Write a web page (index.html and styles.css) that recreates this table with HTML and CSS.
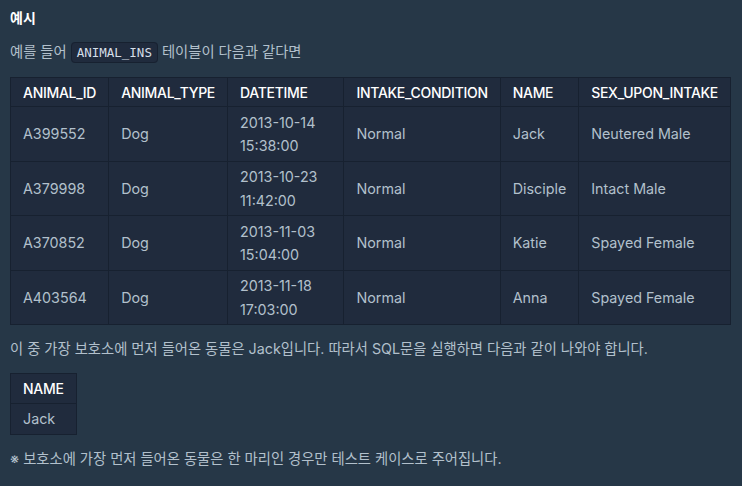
FILE: index.html
```html
<!DOCTYPE html>
<html lang="ko">
<head>
<meta charset="utf-8">
<link rel="stylesheet" href="styles.css">
</head>
<body>
<div class="doc">
  <h5 class="title">예시</h5>
  <p class="para">예를 들어 <code class="code">ANIMAL_INS</code> 테이블이 다음과 같다면</p>
  <table class="tbl tbl-wide">
    <thead>
      <tr><th>ANIMAL_ID</th><th>ANIMAL_TYPE</th><th>DATETIME</th><th>INTAKE_CONDITION</th><th>NAME</th><th>SEX_UPON_INTAKE</th></tr>
    </thead>
    <tbody>
      <tr><td>A399552</td><td>Dog</td><td class="wrap">2013-10-14 15:38:00</td><td>Normal</td><td>Jack</td><td>Neutered Male</td></tr>
      <tr><td>A379998</td><td>Dog</td><td class="wrap">2013-10-23 11:42:00</td><td>Normal</td><td>Disciple</td><td>Intact Male</td></tr>
      <tr><td>A370852</td><td>Dog</td><td class="wrap">2013-11-03 15:04:00</td><td>Normal</td><td>Katie</td><td>Spayed Female</td></tr>
      <tr><td>A403564</td><td>Dog</td><td class="wrap">2013-11-18 17:03:00</td><td>Normal</td><td>Anna</td><td>Spayed Female</td></tr>
    </tbody>
  </table>
  <p class="para">이 중 가장 보호소에 먼저 들어온 동물은 Jack입니다. 따라서 SQL문을 실행하면 다음과 같이 나와야 합니다.</p>
  <table class="tbl">
    <thead><tr><th>NAME</th></tr></thead>
    <tbody><tr><td>Jack</td></tr></tbody>
  </table>
  <p class="para">※ 보호소에 가장 먼저 들어온 동물은 한 마리인 경우만 테스트 케이스로 주어집니다.</p>
</div>
</body>
</html>
```

FILE: styles.css
```css
html, body {
  margin: 0;
  padding: 0;
  background: #263747;
}
.doc {
  padding: 6px 11px 0 10px;
  font-family: Inter, "Noto Sans CJK KR", sans-serif;
  font-size: 14.3px;
  line-height: 24px;
  color: #b2c0cc;
}
.title {
  margin: 0 0 10px 0;
  font-size: 14px;
  font-weight: 700;
  color: #ffffff;
  line-height: 24px;
}
.para {
  margin: 0 0 12px 0;
}
.code {
  font-family: "DejaVu Sans Mono", "Liberation Mono", monospace;
  font-size: 12.5px;
  background: #202b3d;
  border: 1px solid #172130;
  border-radius: 4px;
  padding: 2px 5px;
  color: #d5dfe8;
}
.tbl {
  border-collapse: collapse;
  background: #202b3d;
  margin: 0 0 12px 0;
  line-height: 23.25px;
}
.tbl-wide {
  width: 100%;
}
.tbl th, .tbl td {
  border: 1px solid #172130;
  padding: 3.5px 12px;
  text-align: left;
  vertical-align: middle;
  white-space: nowrap;
}
.tbl td.wrap {
  white-space: normal;
}
.tbl th {
  padding-top: 2.5px;
  padding-bottom: 2.5px;
  color: #ffffff;
  font-weight: 500;
  font-size: 14px;
  letter-spacing: -0.3px;
}
.tbl td {
  color: #b2c0cc;
}
```
